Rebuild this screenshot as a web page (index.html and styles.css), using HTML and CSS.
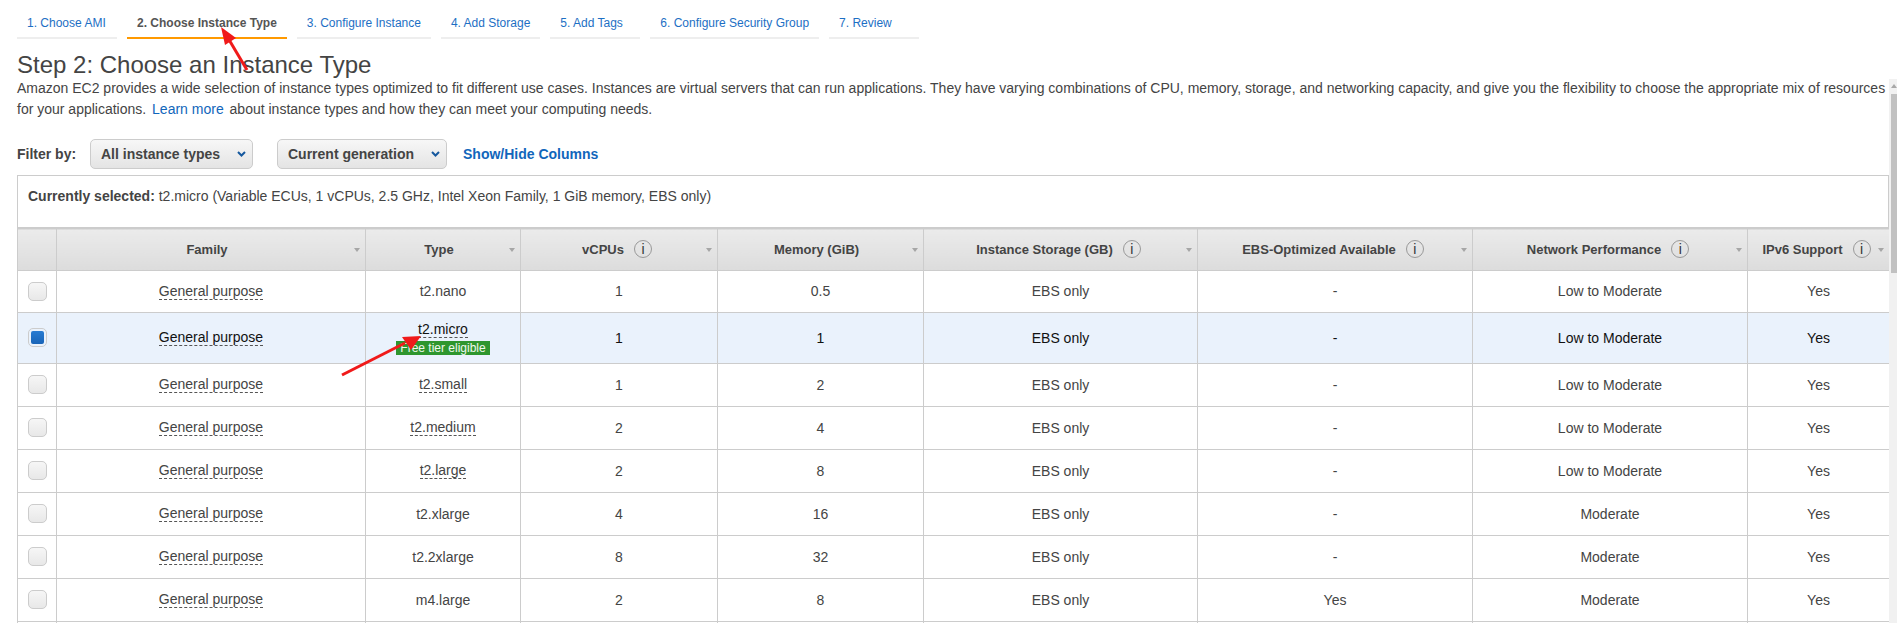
FILE: index.html
```html
<!DOCTYPE html>
<html lang="en">
<head>
  <meta charset="UTF-8" />
  <title>Step 2: Choose an Instance Type</title>
  <link rel="stylesheet" href="styles.css">
</head>
<body>
  <div class="page">
    <nav class="tabs">
      <a class="tab tab-first" href="#">1. Choose AMI</a>
      <a class="tab tab-active" href="#">2. Choose Instance Type</a>
      <a class="tab" href="#">3. Configure Instance</a>
      <a class="tab" href="#">4. Add Storage</a>
      <a class="tab" href="#">5. Add Tags</a>
      <a class="tab" href="#">6. Configure Security Group</a>
      <a class="tab" href="#">7. Review</a>
    </nav>

    <h2 class="title">Step 2: Choose an Instance Type</h2>
    <p class="intro">Amazon EC2 provides a wide selection of instance types optimized to fit different use cases. Instances are virtual servers that can run applications. They have varying combinations of CPU, memory, storage, and networking capacity, and give you the flexibility to choose the appropriate mix of resources for your applications. <a class="learn" href="#">Learn more</a> about instance types and how they can meet your computing needs.</p>

    <div class="filters">
      <span class="filter-label">Filter by:</span>
      <div class="select select-types">All instance types
        <svg class="chevron" width="9" height="6" viewBox="0 0 9 6"><path d="M1 1l3.5 3.5L8 1" fill="none" stroke="#15589e" stroke-width="2"/></svg>
      </div>
      <div class="select select-gen">Current generation
        <svg class="chevron" width="9" height="6" viewBox="0 0 9 6"><path d="M1 1l3.5 3.5L8 1" fill="none" stroke="#15589e" stroke-width="2"/></svg>
      </div>
      <a class="columns-link" href="#">Show/Hide Columns</a>
    </div>

    <div class="selected-panel"><b>Currently selected:</b> t2.micro (Variable ECUs, 1 vCPUs, 2.5 GHz, Intel Xeon Family, 1 GiB memory, EBS only)</div>

    <table class="instances">
      <colgroup>
        <col class="c-check"><col class="c-family"><col class="c-type"><col class="c-vcpu"><col class="c-mem"><col class="c-storage"><col class="c-ebs"><col class="c-net"><col class="c-ipv6">
      </colgroup>
      <thead>
        <tr>
          <th></th>
          <th><div class="th-in">Family<i class="caret"></i></div></th>
          <th><div class="th-in">Type<i class="caret"></i></div></th>
          <th><div class="th-in">vCPUs<span class="info">i</span><i class="caret"></i></div></th>
          <th><div class="th-in">Memory (GiB)<i class="caret"></i></div></th>
          <th><div class="th-in">Instance Storage (GB)<span class="info">i</span><i class="caret"></i></div></th>
          <th><div class="th-in">EBS-Optimized Available<span class="info">i</span><i class="caret"></i></div></th>
          <th><div class="th-in">Network Performance<span class="info">i</span><i class="caret"></i></div></th>
          <th><div class="th-in">IPv6 Support<span class="info">i</span><i class="caret"></i></div></th>
        </tr>
      </thead>
      <tbody>
        <tr class="first">
          <td><span class="check"></span></td>
          <td><span class="dashed">General purpose</span></td>
          <td>t2.nano</td><td>1</td><td>0.5</td><td>EBS only</td><td>-</td><td>Low to Moderate</td><td>Yes</td>
        </tr>
        <tr class="picked">
          <td><span class="check check-on"></span></td>
          <td><span class="dashed">General purpose</span></td>
          <td class="micro"><span class="dashed">t2.micro</span><div class="free">Free tier eligible</div></td>
          <td>1</td><td>1</td><td>EBS only</td><td>-</td><td>Low to Moderate</td><td>Yes</td>
        </tr>
        <tr>
          <td><span class="check"></span></td>
          <td><span class="dashed">General purpose</span></td>
          <td><span class="dashed">t2.small</span></td><td>1</td><td>2</td><td>EBS only</td><td>-</td><td>Low to Moderate</td><td>Yes</td>
        </tr>
        <tr>
          <td><span class="check"></span></td>
          <td><span class="dashed">General purpose</span></td>
          <td><span class="dashed">t2.medium</span></td><td>2</td><td>4</td><td>EBS only</td><td>-</td><td>Low to Moderate</td><td>Yes</td>
        </tr>
        <tr>
          <td><span class="check"></span></td>
          <td><span class="dashed">General purpose</span></td>
          <td><span class="dashed">t2.large</span></td><td>2</td><td>8</td><td>EBS only</td><td>-</td><td>Low to Moderate</td><td>Yes</td>
        </tr>
        <tr>
          <td><span class="check"></span></td>
          <td><span class="dashed">General purpose</span></td>
          <td>t2.xlarge</td><td>4</td><td>16</td><td>EBS only</td><td>-</td><td>Moderate</td><td>Yes</td>
        </tr>
        <tr>
          <td><span class="check"></span></td>
          <td><span class="dashed">General purpose</span></td>
          <td>t2.2xlarge</td><td>8</td><td>32</td><td>EBS only</td><td>-</td><td>Moderate</td><td>Yes</td>
        </tr>
        <tr>
          <td><span class="check"></span></td>
          <td><span class="dashed">General purpose</span></td>
          <td>m4.large</td><td>2</td><td>8</td><td>EBS only</td><td>Yes</td><td>Moderate</td><td>Yes</td>
        </tr>
        <tr>
          <td></td><td></td><td></td><td></td><td></td><td></td><td></td><td></td><td></td>
        </tr>
      </tbody>
    </table>

    <!-- red arrows somebody drew on the screenshot -->
    <svg class="arrows" width="500" height="400" viewBox="0 0 500 400">
      <line x1="247" y1="70" x2="228" y2="38" stroke="#f01a1a" stroke-width="3"/>
      <polygon points="221,27 236,38 225,45" fill="#f01a1a"/>
      <line x1="342" y1="375" x2="405" y2="343" stroke="#f01a1a" stroke-width="3"/>
      <polygon points="421,336 402,337 411,350" fill="#f01a1a"/>
    </svg>

    <div class="scrollbar">
      <div class="scroll-up"></div>
      <div class="scroll-thumb"></div>
    </div>
  </div>
</body>
</html>
```

FILE: styles.css
```css
* {
  box-sizing: border-box;
}

html, body {
  height: 100%;
  margin: 0;
  overflow: hidden;
}

body {
  font-family: 'Liberation Sans', Arial, sans-serif;
  font-size: 14px;
  color: #444;
  background: #fff;
}

a {
  text-decoration: none;
}

.page {
  position: relative;
  height: 623px;
  overflow: hidden;
  padding: 14px 0 0 17px;
}

/* wizard tabs */
.tabs {
  display: flex;
  gap: 10px;
}

.tab {
  min-width: 90px;
  padding: 0 10px 5px;
  border-bottom: 2px solid #eee;
  font-size: 12px;
  line-height: 18px;
  color: #1d6fc4;
}

.tab-first {
  min-width: 100px;
}

.tab-active {
  font-weight: bold;
  color: #555;
  border-bottom-color: #f90;
}

.title {
  margin: 13px 0 0;
  font-size: 24px;
  font-weight: normal;
  line-height: 26px;
  color: #444;
}

.intro {
  width: 1872px;
  margin: 0;
  line-height: 21px;
}

.learn {
  color: #1166bb;
  margin: 0 2px;
}

/* filter row */
.filters {
  display: flex;
  align-items: center;
  height: 30px;
  margin-top: 19px;
  font-weight: bold;
}

.filter-label {
  width: 73px;
}

.select {
  display: flex;
  align-items: center;
  justify-content: space-between;
  height: 30px;
  padding: 0 6px 0 10px;
  border: 1px solid #ccc;
  border-radius: 5px;
  background: linear-gradient(#f7f7f7, #e4e4e4);
}

.select-types {
  width: 163px;
}

.select-gen {
  width: 170px;
  margin-left: 24px;
}

.columns-link {
  margin-left: 16px;
  color: #1166bb;
}

.selected-panel {
  width: 1872px;
  height: 52px;
  margin-top: 6px;
  padding: 10px 10px 0;
  border: 1px solid #ccc;
  border-bottom: 0;
  line-height: 20px;
}

/* instance table */
.instances {
  width: 1872px;
  table-layout: fixed;
  border-collapse: collapse;
}

.c-check { width: 39px; }
.c-family { width: 309px; }
.c-type { width: 155px; }
.c-vcpu { width: 197px; }
.c-mem { width: 206px; }
.c-storage { width: 274px; }
.c-ebs { width: 275px; }
.c-net { width: 275px; }
.c-ipv6 { width: 142px; }

.instances th {
  height: 42px;
  padding: 0;
  border: 1px solid #ccc;
  border-top: 2px solid #ccc;
  background: linear-gradient(#ebebeb, #dcdcdc);
  font-size: 13px;
  font-weight: bold;
}

.th-in {
  position: relative;
  display: flex;
  align-items: center;
  justify-content: center;
  padding-right: 8px;
}

.info {
  width: 18px;
  height: 18px;
  margin: 0 -4px 0 10px;
  border: 1px solid #999;
  border-radius: 50%;
  font-size: 14px;
  font-weight: normal;
  line-height: 16px;
  text-align: center;
  color: #333;
}

.caret {
  position: absolute;
  right: 5px;
  top: 50%;
  margin-top: -1px;
  border-top: 4px solid #a6a6a6;
  border-left: 3.5px solid transparent;
  border-right: 3.5px solid transparent;
}

.instances td {
  height: 43px;
  padding: 0;
  border: 1px solid #ccc;
  text-align: center;
  line-height: 16px;
}

.first td {
  height: 42px;
}

.picked td {
  height: 51px;
  background: #eaf2fc;
  color: #111;
}

.picked .micro {
  padding-top: 1px;
}

.dashed {
  display: inline-block;
  border-bottom: 1px dashed #555;
}

.check {
  display: block;
  width: 19px;
  height: 19px;
  margin: 0 auto;
  border: 1px solid #ccc;
  border-radius: 5px;
  background: linear-gradient(#f6f6f6, #e8e8e8);
}

.check-on {
  padding: 2px;
  background: #f5f5f5;
  background-clip: content-box;
  background-image: linear-gradient(#2a7fd6, #1560b4);
}

.free {
  width: 94px;
  margin: 3px auto 0;
  background: #2e962e;
  color: #f0f8ee;
  font-size: 12px;
  line-height: 14px;
}

.arrows {
  position: absolute;
  top: 0;
  left: 0;
  pointer-events: none;
}

/* fake page scrollbar, the browser one is hidden */
.scrollbar {
  position: absolute;
  top: 79px;
  right: 0;
  bottom: 0;
  width: 8px;
  background: #f1f1f1;
}

.scroll-up {
  height: 15px;
  position: relative;
}

.scroll-up::after {
  content: '';
  position: absolute;
  top: 5px;
  left: 2px;
  border-bottom: 4px solid #a8a8a8;
  border-left: 3px solid transparent;
  border-right: 3px solid transparent;
}

.scroll-thumb {
  width: 6px;
  height: 179px;
  margin-left: 2px;
  background: #c1c1c1;
}
```
